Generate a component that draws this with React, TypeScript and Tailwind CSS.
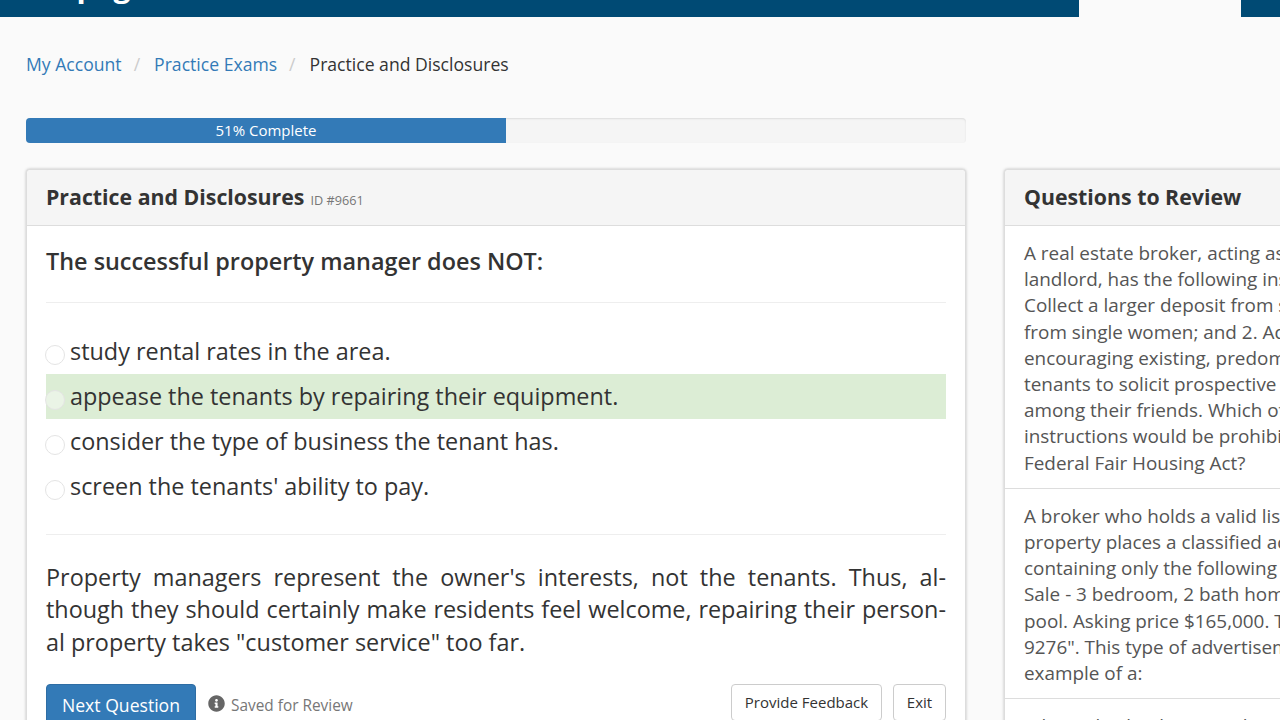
import { FaInfoCircle } from 'react-icons/fa'

const ANSWERS = [
  { text: 'study rental rates in the area.', correct: false },
  { text: 'appease the tenants by repairing their equipment.', correct: true },
  { text: 'consider the type of business the tenant has.', correct: false },
  { text: "screen the tenants' ability to pay.", correct: false },
]

const REVIEW_QUESTIONS = [
  [
    'A real estate broker, acting as agent for a',
    'landlord, has the following instructions: 1.',
    'Collect a larger deposit from single men than',
    'from single women; and 2. Advertise by',
    'encouraging existing, predominantly white,',
    'tenants to solicit prospective tenants from',
    'among their friends. Which of these',
    'instructions would be prohibited under the',
    'Federal Fair Housing Act?',
  ],
  [
    'A broker who holds a valid listing on a',
    'property places a classified advertisement',
    'containing only the following wording: "For',
    'Sale - 3 bedroom, 2 bath home with swimming',
    'pool. Asking price $165,000. Telephone 555-',
    '9276". This type of advertisement is an',
    'example of a:',
  ],
  ['When a broker hires a salesperson'],
]

function Radio() {
  return <span className="w-[20px] h-[20px] shrink-0 rounded-full border border-[#e4e4e4] bg-white/40 mt-[9px] ml-[-1px] mr-[5px]" />
}

export default function App() {
  return (
    <div className="w-[1280px] h-[720px] overflow-hidden bg-[#fafafa] text-[#333] font-['Open_Sans',sans-serif]">
      {/* Top bar */}
      <div className="flex h-[17px] overflow-hidden">
        <div className="w-[1079px] bg-[#004a74] relative overflow-hidden">
          <span className="absolute left-[48px] top-[-29px] text-[30px] leading-[30px] font-bold text-white">A page</span>
          <span className="absolute left-[370px] top-[-19px] text-[18px] leading-[20px] text-white">,</span>
        </div>
        <div className="w-[162px] bg-[#fafafa]" />
        <div className="flex-1 bg-[#004a74]" />
      </div>

      <div className="px-[26px]">
        {/* Breadcrumb */}
        <nav className="flex items-center mt-[34px] h-[26px] text-[17.6px]">
          <span className="text-[#337ab7]">My Account</span>
          <span className="text-[#ccc] pl-[12px] pr-[14px]">/</span>
          <span className="text-[#337ab7]">Practice Exams</span>
          <span className="text-[#ccc] px-[12px]">/</span>
          <span className="text-[#333] ml-[2px]">Practice and Disclosures</span>
        </nav>

        {/* Progress */}
        <div className="mt-[41px] w-[940px] h-[25px] rounded-[4px] bg-[#f5f5f5] overflow-hidden shadow-[inset_0_1px_2px_rgba(0,0,0,0.1)]">
          <div className="w-[480px] h-full bg-[#337ab7] text-white text-[15px] leading-[25px] text-center">51% Complete</div>
        </div>

        <div className="flex gap-[38px] mt-[26px] w-[1400px] items-start">
          {/* Question panel */}
          <section className="w-[940px] shrink-0 bg-white rounded-[4px] border border-[#ddd] shadow-[0_0_3px_rgba(0,0,0,0.25)]">
            <header className="h-[56px] flex items-baseline px-[19px] pt-[12px] bg-[#f5f5f5] border-b border-[#ddd] rounded-t-[4px]">
              <h2 className="text-[21.3px] font-bold leading-[30px] text-[#333]">Practice and Disclosures</h2>
              <small className="text-[12.7px] text-[#777] ml-[6px]">ID #9661</small>
            </header>
            <div className="px-[19px]">
              <h3 className="text-[23.4px] font-semibold leading-[30px] mt-[20px] pb-[26px] border-b border-[#eee]">The successful property manager does NOT:</h3>
              <div className="mt-[26px] mb-[25px]">
                {ANSWERS.map((a) => (
                  <div key={a.text} className={`flex h-[45px] items-start pt-[7px] text-[23.4px] leading-[30px] ${a.correct ? 'bg-[#dcedd5]' : ''}`}>
                    <Radio />
                    <span>{a.text}</span>
                  </div>
                ))}
              </div>
              <div className="border-t border-[#eee] pt-[26px]">
                <p className="text-[23.4px] leading-[32.4px]">
                  <span className="block whitespace-nowrap [text-align-last:justify]">Property managers represent the owner's interests, not the tenants. Thus, al-</span>
                  <span className="block whitespace-nowrap [text-align-last:justify]">though they should certainly make residents feel welcome, repairing their person-</span>
                  <span className="block whitespace-nowrap">al property takes "customer service" too far.</span>
                </p>
              </div>
              <div className="flex items-start mt-[26px]">
                <button className="w-[150px] h-[42px] rounded-[4px] bg-[#337ab7] text-white text-[17.6px] border border-[#2e6da4]">Next Question</button>
                <span className="flex items-center ml-[12px] mt-[10px] text-[15.4px] text-[#777]">
                  <FaInfoCircle className="w-[17px] h-[17px] text-[#666] mr-[6px] mt-[-4px]" />
                  Saved for Review
                </span>
                <button className="ml-auto w-[151px] h-[37px] rounded-[4px] bg-white text-[15px] border border-[#ccc]">Provide Feedback</button>
                <button className="ml-[11px] w-[53px] h-[37px] rounded-[4px] bg-white text-[15px] border border-[#ccc]">Exit</button>
              </div>
            </div>
          </section>

          {/* Review panel */}
          <section className="w-[400px] shrink-0 bg-white rounded-[4px] border border-[#ddd] shadow-[0_0_3px_rgba(0,0,0,0.25)]">
            <header className="h-[56px] flex items-center px-[19px] pb-[2px] bg-[#f5f5f5] border-b border-[#ddd] rounded-t-[4px]">
              <h2 className="text-[21.3px] font-bold text-[#333]">Questions to Review</h2>
            </header>
            {REVIEW_QUESTIONS.map((q) => (
              <div key={q[0]} className="px-[19px] pt-[14px] pb-[12px] border-b border-[#ddd] text-[#555] text-[18.9px] leading-[26.2px]">
                {q.map((line) => (
                  <div key={line} className="whitespace-nowrap">{line}</div>
                ))}
              </div>
            ))}
          </section>
        </div>
      </div>
    </div>
  )
}
